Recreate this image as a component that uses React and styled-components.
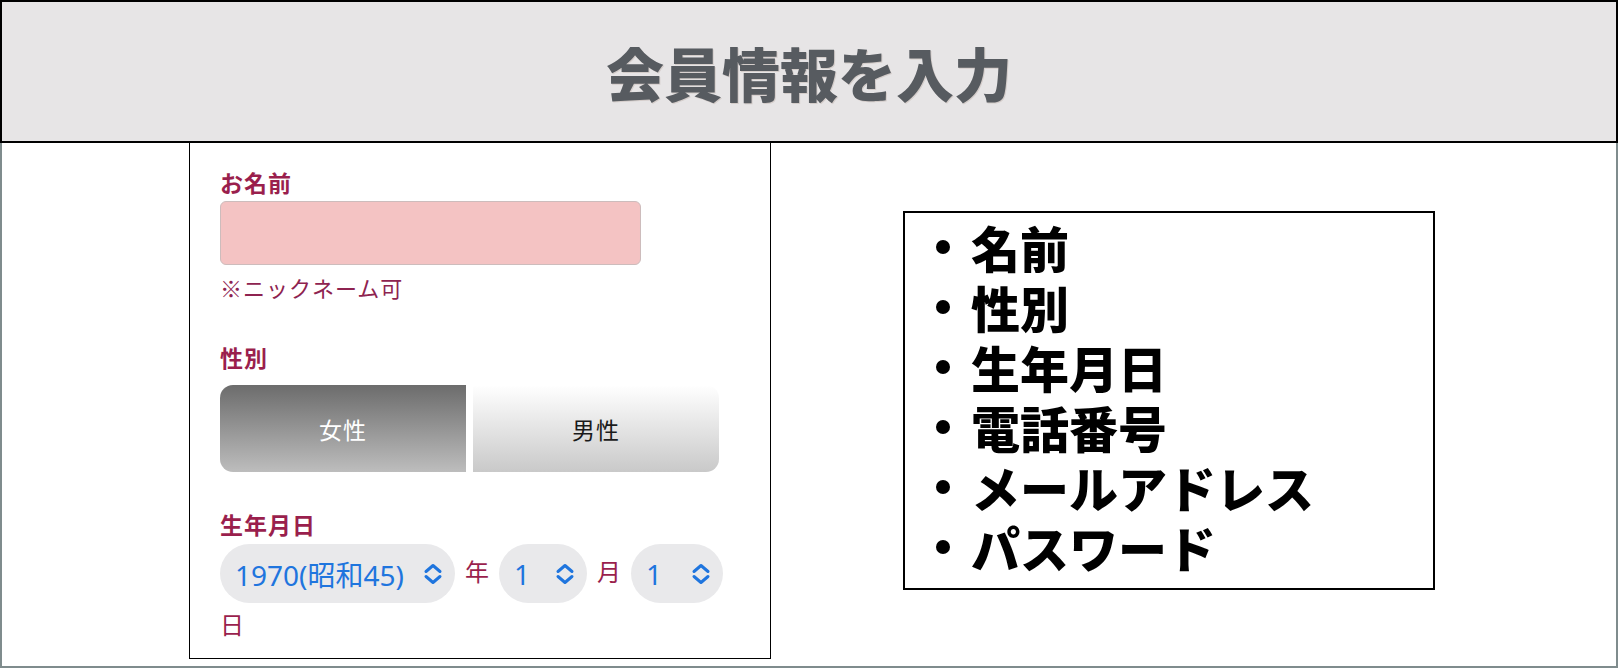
import React from 'react';
import styled, { createGlobalStyle } from 'styled-components';

const GlobalStyle = createGlobalStyle`
    html, body {
        margin: 0;
        padding: 0;
        background: #fff;
    }
    body {
        font-family: "Noto Sans CJK JP", "Noto Sans", sans-serif;
    }
    * {
        box-sizing: border-box;
    }
`;

const Page = styled.div`
    width: 1618px;
    height: 668px;
    display: flex;
    flex-direction: column;
    overflow: hidden;
`;

const Header = styled.header`
    height: 143px;
    flex-shrink: 0;
    background: #e7e5e6;
    border: 2px solid #000;
    display: flex;
    align-items: center;
    justify-content: center;
`;

const Title = styled.h1`
    margin: 0;
    font-size: 58px;
    font-weight: 900;
    line-height: 1;
    color: #575b60;
    text-shadow: 1px 1px 0 rgba(110, 70, 50, 0.15);
`;

const Main = styled.main`
    flex: 1;
    display: flex;
    align-items: flex-start;
    gap: 132px;
    padding-left: 187px;
    border: 2px solid #7f8c8d;
    border-top: none;
`;

const FormPanel = styled.section`
    width: 582px;
    height: 516px;
    flex-shrink: 0;
    border: 1px solid #000;
    border-top: none;
    padding: 24px 0 0 30px;
`;

const Field = styled.div`
    margin-top: ${(p) => p.$gap || 0}px;
`;

const Label = styled.div`
    font-size: 23px;
    line-height: 30px;
    font-weight: 700;
    letter-spacing: 1px;
    color: #9a1f4d;
`;

const NameInput = styled.input`
    display: block;
    margin-top: 4px;
    width: 421px;
    height: 64px;
    background: #f4c3c3;
    border: 1px solid #cdbcbc;
    border-radius: 6px;
    outline: none;
`;

const Note = styled.div`
    margin-top: 7px;
    font-size: 22px;
    line-height: 30px;
    letter-spacing: 1px;
    color: #8e2350;
`;

const Segmented = styled.div`
    margin-top: 13px;
    width: 499px;
    display: flex;
    gap: 7px;
`;

const GenderButton = styled.button`
    flex: 1;
    height: 87px;
    border: none;
    font-family: inherit;
    font-size: 23px;
    letter-spacing: 1px;
    color: ${(p) => (p.$active ? '#fff' : '#1a1a1a')};
    background: ${(p) =>
        p.$active
            ? 'linear-gradient(#6c6c6c, #bdbdbd)'
            : 'linear-gradient(#ffffff, #c9c9c9)'};
    border-radius: ${(p) => (p.$side === 'left' ? '13px 0 0 13px' : '0 13px 13px 0')};
`;

const DateRow = styled.div`
    margin-top: 5px;
    width: 520px;
    display: flex;
    flex-wrap: wrap;
    align-items: center;
    gap: 6px 10px;
`;

const SelectPill = styled.div`
    width: ${(p) => p.$width}px;
    height: 59px;
    border-radius: 30px;
    background: #e9e9eb;
    display: flex;
    align-items: center;
    justify-content: space-between;
    padding: 0 12px 0 15px;
    font-family: "Noto Sans", "Noto Sans CJK JP", sans-serif;
    font-size: 28px;
    color: #1f75de;
`;

const Unit = styled.span`
    font-size: 24px;
    line-height: 30px;
    color: #9a1f4d;
    margin-bottom: ${(p) => (p.$raised ? 6 : 0)}px;
`;

const ItemBox = styled.ul`
    margin: 68px 0 0;
    width: 532px;
    height: 379px;
    flex-shrink: 0;
    border: 2px solid #000;
    list-style: none;
    padding: 4px 0 0 31px;
`;

const Item = styled.li`
    display: flex;
    align-items: center;
    gap: 21px;
    height: 60px;
    font-size: 49px;
    line-height: 60px;
    font-weight: 900;
    color: #000;

    &::before {
        content: '';
        width: 14px;
        height: 14px;
        border-radius: 50%;
        background: #000;
        flex-shrink: 0;
    }
`;

function Chevrons() {
    return (
        <svg width="20" height="22" viewBox="0 0 20 22" fill="none"
            stroke="#1f75de" strokeWidth="3" strokeLinecap="round" strokeLinejoin="round">
            <path d="M3 8.5 L10 2.5 L17 8.5" />
            <path d="M3 13.5 L10 19.5 L17 13.5" />
        </svg>
    );
}

function Select({ value, width }) {
    return (
        <SelectPill $width={width} role="combobox">
            <span>{value}</span>
            <Chevrons />
        </SelectPill>
    );
}

const items = ['名前', '性別', '生年月日', '電話番号', 'メールアドレス', 'パスワード'];

export default function App() {
    return (
        <>
            <GlobalStyle />
            <Page>
                <Header>
                    <Title>会員情報を入力</Title>
                </Header>
                <Main>
                    <FormPanel>
                        <Field>
                            <Label>お名前</Label>
                            <NameInput type="text" />
                            <Note>※ニックネーム可</Note>
                        </Field>
                        <Field $gap={40}>
                            <Label>性別</Label>
                            <Segmented>
                                <GenderButton $active $side="left">女性</GenderButton>
                                <GenderButton $side="right">男性</GenderButton>
                            </Segmented>
                        </Field>
                        <Field $gap={37}>
                            <Label>生年月日</Label>
                            <DateRow>
                                <Select value="1970(昭和45)" width={235} />
                                <Unit $raised>年</Unit>
                                <Select value="1" width={88} />
                                <Unit $raised>月</Unit>
                                <Select value="1" width={92} />
                                <Unit>日</Unit>
                            </DateRow>
                        </Field>
                    </FormPanel>
                    <ItemBox>
                        {items.map((item, index) => (
                            <Item key={index}>{item}</Item>
                        ))}
                    </ItemBox>
                </Main>
            </Page>
        </>
    );
}
